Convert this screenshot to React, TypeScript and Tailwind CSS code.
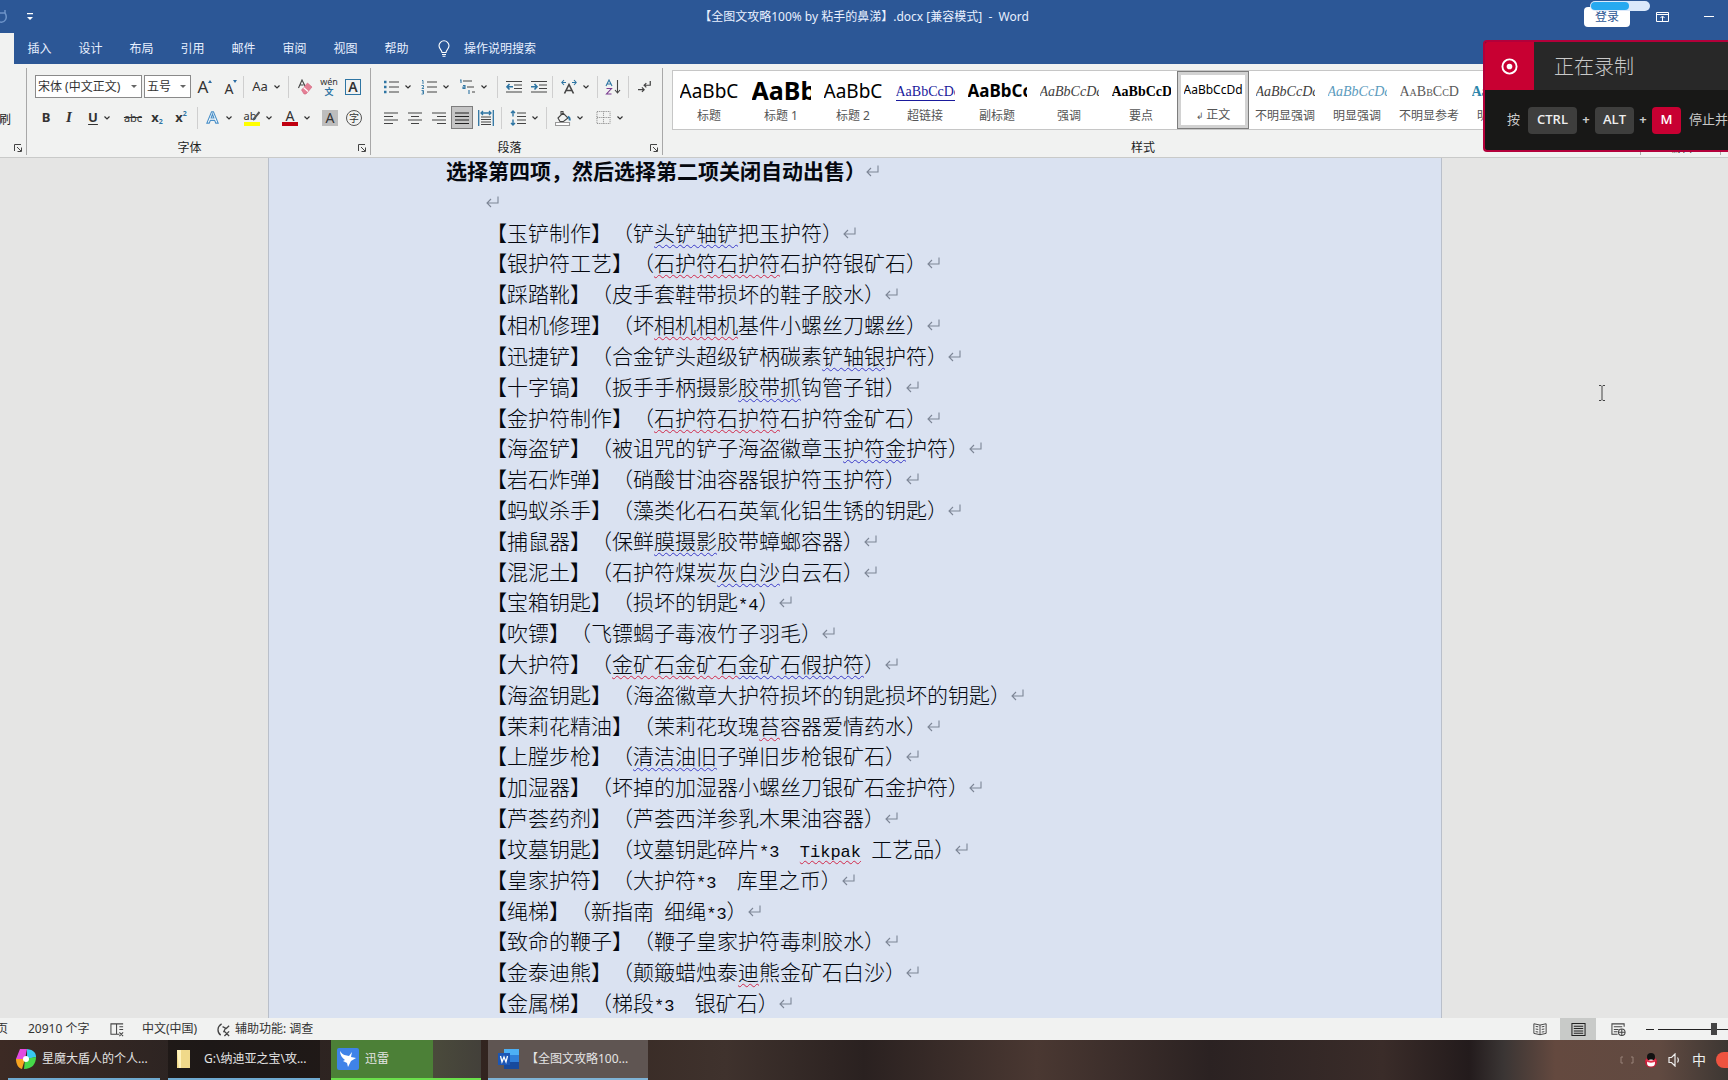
import type { ReactNode } from 'react';
import clsx from 'clsx';

const tabs = ['插入', '设计', '布局', '引用', '邮件', '审阅', '视图', '帮助'];

// ~text~ is a grammar hint (blue), ^text^ is a spelling hint (red)
const paragraphs = [
  '【玉铲制作】（铲~头铲轴铲~把玉护符）',
  '【银护符工艺】（^石护符石护符^石护符银矿石）',
  '【踩踏靴】（皮手套鞋带损坏的鞋子胶水）',
  '【相机修理】（坏^相机相机^基件小螺丝刀螺丝）',
  '【迅捷铲】（合金铲头超级铲柄碳素~铲轴银~护符）',
  '【十字镐】（扳手手柄摄影~胶带抓~钩管子钳）',
  '【金护符制作】（^石护符石护符^石护符金矿石）',
  '【海盗铲】（被诅咒的铲子海盗徽章玉~护符金~护符）',
  '【岩石炸弹】（硝酸甘油容器银护符玉护符）',
  '【蚂蚁杀手】（藻类化石石英氧化铝生锈的钥匙）',
  '【捕鼠器】（保鲜~膜摄影~胶带蟑螂容器）',
  '【混泥土】（石护符煤炭~灰白沙~白云石）',
  '【宝箱钥匙】（损坏的钥匙*4）',
  '【吹镖】（飞镖蝎子毒液竹子羽毛）',
  '【大护符】（^金矿石金矿石^~金矿石假护符~）',
  '【海盗钥匙】（海盗徽章大护符损坏的钥匙损坏的钥匙）',
  '【茉莉花精油】（茉莉花玫瑰^苔^容器爱情药水）',
  '【上膛步枪】（~清洁油旧~子弹旧步枪银矿石）',
  '【加湿器】（坏掉的加湿器小螺丝刀银矿石金护符）',
  '【芦荟药剂】（芦荟西洋参乳木果油容器）',
  '【坟墓钥匙】（坟墓钥匙碎片*3  ^Tikpak^ 工艺品）',
  '【皇家护符】（大护符*3  库里之币）',
  '【绳梯】（新指南 细绳*3）',
  '【致命的鞭子】（鞭子皇家护符毒刺胶水）',
  '【金泰迪熊】（颠簸蜡烛泰^迪^熊金矿石白沙）',
  '【金属梯】（梯段*3  银矿石）',
];

const styles = [
  { name: '标题', sample: 'AaBbC', look: 'text-[19px] text-black' },
  { name: '标题 1', sample: 'AaBb', look: 'text-[25px] font-bold text-black' },
  { name: '标题 2', sample: 'AaBbC', look: 'text-[19px] text-black' },
  { name: '超链接', sample: 'AaBbCcDd', look: 'font-[Liberation_Serif] text-[14px] text-[#1a1a9c] underline underline-offset-4' },
  { name: '副标题', sample: 'AaBbCc', look: 'text-[17px] font-bold text-black' },
  { name: '强调', sample: 'AaBbCcDd', look: 'font-[Liberation_Serif] text-[14px] italic text-[#404040]' },
  { name: '要点', sample: 'AaBbCcD', look: 'font-[Liberation_Serif] text-[14px] font-bold text-black' },
  { name: '正文', sample: 'AaBbCcDd', look: 'text-[12px] text-black', active: true },
  { name: '不明显强调', sample: 'AaBbCcDd', look: 'font-[Liberation_Serif] text-[14px] italic text-[#404040]' },
  { name: '明显强调', sample: 'AaBbCcDd', look: 'font-[Liberation_Serif] text-[14px] italic text-[#5b9bbd]' },
  { name: '不明显参考', sample: 'AaBbCcDd', look: 'font-[Liberation_Serif] text-[14px] text-[#5a5a5a] [font-variant-caps:small-caps]' },
  { name: '明显参考', sample: 'AaBbCcDd', look: 'font-[Liberation_Serif] text-[14px] font-bold text-[#2e86ab]' },
];

function Chevron() {
  return (
    <svg viewBox="0 0 6 4" className="h-1 w-1.5 shrink-0" fill="none" stroke="#333" strokeWidth="1.2">
      <path d="M.5.5 3 3 5.500.5" />
    </svg>
  );
}

function Sep() {
  return <div className="h-[22px] w-px shrink-0 bg-[#cfcfcf]" />;
}

function Glyph({ children, size = 16 }: { children: ReactNode; size?: number }) {
  return (
    <svg viewBox="0 0 16 16" width={size} height={size} className="shrink-0" fill="none" stroke="#444" strokeWidth="1.1">
      {children}
    </svg>
  );
}

function Tool({ label, className, drop, children }: { label: string; className?: string; drop?: boolean; children: ReactNode }) {
  return (
    <button aria-label={label} className={clsx('flex h-[23px] shrink-0 items-center justify-center leading-none text-[#333]', className)}>
      {children}
      {drop && <span className="ml-1.5"><Chevron /></span>}
    </button>
  );
}

function Launcher({ label }: { label: string }) {
  return (
    <button aria-label={label} className="mr-1 flex shrink-0">
      <svg viewBox="0 0 8 8" className="h-2 w-2" fill="none" stroke="#444">
        <path d="M.5 7V.5H7M3 3l4 4M7.500 3.500v4h-4" />
      </svg>
    </button>
  );
}

function Group({ label, className, launcher = true, children }: { label: string; className?: string; launcher?: boolean; children: ReactNode }) {
  return (
    <section className={clsx('mb-0.5 mt-1 flex shrink-0 flex-col border-r border-[#a8a8a8] pt-[7px]', className)}>
      {children}
      <div className="mt-3 flex h-3.5 items-center">
        <span className={clsx('flex-1 text-center text-xs leading-[14px] text-[#222]', launcher && 'pr-3.5')}>{label}</span>
        {launcher && <Launcher label={`${label}设置`} />}
      </div>
    </section>
  );
}

function Combo({ label, value, className }: { label: string; value: string; className: string }) {
  return (
    <label className={clsx('relative flex h-[23px] shrink-0 items-center border border-[#8a8a8a] bg-white', className)}>
      <span className="sr-only">{label}</span>
      <select className="w-full appearance-none bg-transparent pl-0.5 text-xs text-[#333] outline-none" defaultValue={value}>
        <option>{value}</option>
      </select>
      <span className="pointer-events-none absolute right-1 border-x-[3px] border-t-[3px] border-x-transparent border-t-[#666]" />
    </label>
  );
}

function FontGroup() {
  return (
    <Group label="字体" className="w-[344px] pl-2">
      <div className="flex items-center">
        <Combo label="字体" value="宋体 (中文正文)" className="w-[107px]" />
        <Combo label="字号" value="五号" className="ml-0.5 w-[47px]" />
        <Tool label="增大字号" className="w-7">
          <span className="text-[17px]">A</span>
          <span className="mb-2.5 border-x-2 border-b-[3px] border-x-transparent border-b-[#2b6ca3]" />
        </Tool>
        <Tool label="减小字号" className="w-6">
          <span className="pt-1 text-[14px]">A</span>
          <span className="mb-2.5 border-x-2 border-t-[3px] border-x-transparent border-t-[#2b6ca3]" />
        </Tool>
        <Sep />
        <Tool label="更改大小写" className="w-11" drop><span className="text-[13px]">Aa</span></Tool>
        <Sep />
        <div className="flex gap-2 pl-2">
          <Tool label="清除格式">
            <Glyph>
              <path d="M1.500 9 5 1l3 6M2.500 6h4" />
              <path d="m4.500 11 6-7 4.500 4-6 7h-2z" fill="#e57f95" stroke="#d0647d" strokeWidth=".6" />
              <path d="m6.500 8.500 4.500 4" stroke="#fff" />
            </Glyph>
          </Tool>
          <Tool label="拼音指南" className="w-4 flex-col">
            <span className="text-[9px] leading-[10px]">wén</span>
            <span className="text-[9px] font-bold leading-[10px] text-[#2e75a3]">文</span>
          </Tool>
          <Tool label="字符边框"><span className="flex h-4 w-4 items-center justify-center border border-[#2e75a3] text-[14px] font-semibold">A</span></Tool>
        </div>
      </div>
      <div className="mt-2 flex items-center">
        <Tool label="加粗" className="w-[22px] text-[13px] font-bold">B</Tool>
        <Tool label="倾斜" className="w-6 font-[Liberation_Serif] text-[15px] font-bold italic">I</Tool>
        <Tool label="下划线" className="mr-1 w-9 text-[13px] font-bold" drop><span className="underline underline-offset-2">U</span></Tool>
        <Tool label="删除线" className="w-6 text-[11px]"><span className="line-through">abc</span></Tool>
        <Tool label="下标" className="w-6 text-[13px] font-bold">x<span className="pt-2 text-[7px] text-[#2e75a3]">2</span></Tool>
        <Tool label="上标" className="mr-1 w-6 text-[13px] font-bold">x<span className="pb-2 text-[7px] text-[#2e75a3]">2</span></Tool>
        <Sep />
        <Tool label="文本效果" className="w-10" drop>
          <Glyph size={15}>
            <path d="M2 14 7 2h2l5 12h-2.500l-1.200-3H5.700l-1.200 3zM6.500 8.500h3L8 4.500z" stroke="#4a90c8" strokeWidth="1.2" fill="#fff" />
          </Glyph>
        </Tool>
        <Tool label="突出显示" className="w-10" drop>
          <span className="flex flex-col items-center">
            <span className="flex text-[11px] leading-3">ab
              <svg viewBox="0 0 8 12" className="-ml-1 h-3 w-2" stroke="#555" strokeWidth="2"><path d="M7.500 2 1 10" /></svg>
            </span>
            <span className="h-1 w-4 bg-[#ffff00]" />
          </span>
        </Tool>
        <Tool label="字体颜色" className="w-9" drop>
          <span className="flex flex-col items-center">
            <span className="text-[14px] leading-3">A</span>
            <span className="h-1 w-4 bg-[#c00010]" />
          </span>
        </Tool>
        <div className="flex gap-2 pl-2">
          <Tool label="字符底纹"><span className="flex h-4 w-4 items-center justify-center bg-[#bdbdbd] text-[14px]">A</span></Tool>
          <Tool label="带圈字符"><span className="flex h-4 w-4 items-center justify-center rounded-full border border-[#555] text-[10px]">字</span></Tool>
        </div>
      </div>
    </Group>
  );
}

function ParagraphGroup() {
  return (
    <Group label="段落" className="w-[292px] pl-3">
      <div className="flex items-center">
        <Tool label="项目符号" className="w-7" drop>
          <Glyph>
            <path d="M6 3h10M6 8h10M6 13h10" />
            <path d="M1 3h2.500M1 8h2.500M1 13h2.500" stroke="#2e75a3" strokeWidth="2.4" />
          </Glyph>
        </Tool>
        <Tool label="编号" className="ml-2.5 w-7" drop>
          <Glyph>
            <path d="M6 3h10M6 8h10M6 13h10" />
            <path d="M1 1.500h1V5M.5 6.500h2V8L1 9.500h2M.5 11.500h2v3.500H.5M1 13h1.500" stroke="#2e75a3" strokeWidth=".9" />
          </Glyph>
        </Tool>
        <Tool label="多级列表" className="ml-2.5 mr-2.5 w-7" drop>
          <Glyph>
            <path d="M4 2h9M8 8h7M13 13h3" />
            <path d="M1 1h1v3M4 6.500h2v3H4V8h2M10 11v4" stroke="#2e75a3" />
          </Glyph>
        </Tool>
        <Sep />
        <Tool label="减少缩进" className="w-7 pl-1">
          <Glyph>
            <path d="M0 2.500h16M8 6h8M8 9.500h8M0 13h16" />
            <path d="M7 7.800H1M3.500 5 1 7.800l2.500 2.700" stroke="#2e75a3" strokeWidth="1.6" />
          </Glyph>
        </Tool>
        <Tool label="增加缩进" className="w-[26px]">
          <Glyph>
            <path d="M0 2.500h16M8 6h8M8 9.500h8M0 13h16" />
            <path d="M0 7.800h6M3.500 5 6 7.800l-2.500 2.700" stroke="#2e75a3" strokeWidth="1.6" />
          </Glyph>
        </Tool>
        <Sep />
        <Tool label="中文版式" className="w-11" drop>
          <Glyph>
            <path d="m3.500 14.500 4.500-9 4.500 9M5 11.500h6" strokeWidth="1.6" />
            <path d="M5 3.500H1M3 1 .8 3.500 3 6M11 3.500h4M13 1l2.200 2.500L13 6" stroke="#2e75a3" />
          </Glyph>
        </Tool>
        <Sep />
        <Tool label="排序" className="w-[30px]">
          <Glyph>
            <path d="m1 7 3-6 3 6M2 5h4" stroke="#2e75a3" />
            <path d="M1.500 9.500h5l-5 5.500h5" stroke="#7a3b8f" />
            <path d="M12.500 1v13M10 11l2.500 3 2.500-3" />
          </Glyph>
        </Tool>
        <Sep />
        <Tool label="显示编辑标记" className="w-8">
          <Glyph size={14}>
            <path d="M14 1v5H7M9.500 3.500 7 6l2.500 2.500M0 11h7M4.500 8.500 7 11l-2.500 2.500" strokeWidth="1.4" />
          </Glyph>
        </Tool>
      </div>
      <div className="mt-2 flex items-center">
        <Tool label="左对齐" className="w-4"><Glyph><path d="M1 3h14M1 6.500h9M1 10h14M1 13.500h9" /></Glyph></Tool>
        <Tool label="居中" className="ml-2 w-4"><Glyph><path d="M1 3h14M4 6.500h8M1 10h14M4 13.500h8" /></Glyph></Tool>
        <Tool label="右对齐" className="ml-2 w-4"><Glyph><path d="M1 3h14M6 6.500h9M1 10h14M6 13.500h9" /></Glyph></Tool>
        <Tool label="两端对齐" className="ml-1 w-[22px] border border-[#7d7d7d] bg-[#c5c5c5]"><Glyph><path d="M1 3h14M1 6.500h14M1 10h14M1 13.500h14" stroke="#222" /></Glyph></Tool>
        <Tool label="分散对齐" className="ml-1 mr-1.5 w-[18px]">
          <Glyph>
            <path d="M3 7h10M3 9.500h10M3 12h10M3 14.500h10" />
            <path d="M.7 0v16M15.300 0v16M3 3h10M5 1 3 3l2 2M11 1l2 2-2 2" stroke="#2e75a3" strokeWidth="1.3" />
          </Glyph>
        </Tool>
        <Sep />
        <Tool label="行距" className="w-11" drop>
          <Glyph>
            <path d="M7 3h9M7 6.500h9M7 10h9M7 13.500h9" />
            <path d="M3 1v5.500M1 3l2-2 2 2M3 9.500V15M1 13l2 2 2-2" stroke="#2e75a3" strokeWidth="1.4" />
          </Glyph>
        </Tool>
        <Sep />
        <Tool label="底纹" className="w-11" drop>
          <Glyph>
            <path d="m3 8 5-5 5 5-4.500 3.500H5zM6 5V1.500h2V5" />
            <path d="M13 6.500c1.500 1 2 2.500 1.500 4" stroke="#2e75a3" strokeWidth="2" />
            <path d="M.5 12.500h14v3H.5z" fill="#fff" stroke="#999" />
          </Glyph>
        </Tool>
        <Tool label="边框" className="w-9" drop>
          <Glyph size={15}><path d="M1 1.500h14v13H1zM8 1.500v13M1 8h14" strokeDasharray="1 1" stroke="#888" /></Glyph>
        </Tool>
      </div>
    </Group>
  );
}

function StylesGroup() {
  return (
    <Group label="样式" className="w-[978px] pl-[9px]">
      <div className="-mb-px -mt-[5px] flex h-[60px] overflow-hidden border border-[#c6c6c6] bg-white">
        {styles.map((s) => (
          <button
            key={s.name}
            className={clsx(
              'flex w-[72px] shrink-0 flex-col items-center justify-end',
              s.active ? 'border border-[#7d7d7d] bg-white pb-1 outline-[3px] -outline-offset-4 outline-[#d2d2d2]' : 'pb-[5px]'
            )}
          >
            <span className={clsx('mb-px flex h-8 w-[59px] items-center overflow-hidden whitespace-nowrap', s.look)}>{s.sample}</span>
            <span className="whitespace-nowrap text-xs leading-4 text-[#555]">
              {s.active && <span className="text-[9px]">↲ </span>}
              {s.name}
            </span>
          </button>
        ))}
      </div>
    </Group>
  );
}

function ReturnMark() {
  return (
    <svg viewBox="0 0 13 12" className="h-3 w-[13px] shrink-0" fill="none" stroke="#7d8696" strokeWidth="1.1">
      <path d="M12 .5V7H1M5 3 1 7l4 4" />
    </svg>
  );
}

function Line({ text }: { text: string }) {
  const runs = text.split(/(~[^~]+~|\^[^^]+\^)/).filter(Boolean);
  return (
    <p className="flex h-[30px] items-center whitespace-pre pl-10">
      <span>
        {runs.map((run, i) => {
          const hint = run[0] === '~' ? 'blue' : run[0] === '^' ? 'red' : '';
          const body = hint ? run.slice(1, -1) : run;
          return (
            <span
              key={i}
              className={clsx(
                hint && 'underline decoration-wavy decoration-1 underline-offset-[3px] [text-decoration-skip-ink:none]',
                hint === 'blue' && 'decoration-[#3a3ac8]',
                hint === 'red' && 'decoration-[#d0284a]'
              )}
            >
              {body.split(/([ -~]+)/).map((part, j) =>
                /^[ -~]+$/.test(part) ? <span key={j} className="font-[Liberation_Mono] text-[17px] leading-none">{part}</span> : part
              )}
            </span>
          );
        })}
      </span>
      <ReturnMark />
    </p>
  );
}

function Recorder() {
  return (
    <aside className="absolute right-0 top-10 w-[245px] overflow-hidden rounded-l border-2 border-r-0 border-[#b3003a] bg-[#181817] text-[#c9c9c9]">
      <div className="flex h-12 items-center bg-[#282828]">
        <div className="flex h-12 w-[49px] items-center justify-center bg-[#c80032]">
          <svg viewBox="0 0 18 18" className="h-[17px] w-[17px]" fill="none">
            <circle cx="9" cy="9" r="7.500" stroke="#fff" strokeWidth="2" />
            <circle cx="9" cy="9" r="3" fill="#fff" />
          </svg>
        </div>
        <span className="ml-5 pt-0.5 text-[20px] font-light">正在录制</span>
      </div>
      <div className="flex h-[60px] items-center whitespace-nowrap pl-[22px] text-[13px]">
        按
        <kbd className="ml-2 flex h-[27px] w-[49px] items-center justify-center rounded-sm bg-[#3e3e3d] font-[Open_Sans] text-[13px] font-semibold text-[#eee]">CTRL</kbd>
        <span className="w-[18px] text-center font-bold">+</span>
        <kbd className="flex h-[27px] w-[39px] items-center justify-center rounded-sm bg-[#3e3e3d] font-[Open_Sans] text-[13px] font-semibold text-[#eee]">ALT</kbd>
        <span className="w-[18px] text-center font-bold">+</span>
        <kbd className="mr-2 flex h-[27px] w-[29px] items-center justify-center rounded-sm bg-[#c80032] font-[Open_Sans] text-[13px] font-semibold text-white">M</kbd>
        停止并
      </div>
    </aside>
  );
}

function StatusBar() {
  return (
    <footer className="flex h-[22px] shrink-0 items-center overflow-hidden bg-[#f1f2f1] text-xs text-[#333]">
      <span className="w-7 shrink-0"><span className="-ml-1">页</span></span>
      <span className="w-[82px]">20910 个字</span>
      <Glyph size={15}>
        <path d="M1 2h6v11H1zM7 2h7M7 13h3M10 5h4M10 8h4M10 11l4 4M14 11l-4 4" />
      </Glyph>
      <span className="ml-[17px] w-[74px]">中文(中国)</span>
      <Glyph size={15}>
        <path d="M6 2C1 5 1 11 5 14M7 5l4 2 3-3M10 7l-2 4M9 10l5 5M14 10l-5 5" strokeWidth="1.4" />
      </Glyph>
      <span className="ml-1">辅助功能: 调查</span>
      <div className="ml-auto flex h-full shrink-0 items-center">
        <button aria-label="阅读视图" className="flex w-9 justify-center pr-1"><Glyph size={14}><path d="M8 3.500 1 2v11l7 1.500L15 13V2zM8 3.500v11M3 5l3 .5M3 8l3 .5M3 11l3 .5M10 5.500l3-.5M10 8.500l3-.5M10 11.500l3-.5" /></Glyph></button>
        <button aria-label="页面视图" className="flex h-full w-9 items-center justify-center bg-[#c8cac8]"><Glyph size={15}><path d="M1 1.500h14v13H1zM3 4.500h10M3 7h10M3 9.500h10M3 12h10" stroke="#222" /></Glyph></button>
        <button aria-label="Web 视图" className="ml-3 flex w-5 justify-center"><Glyph size={15}><path d="M14 5V2H1v11h6M3 5h9M3 8h5M3 10.500h4" /><circle cx="11.500" cy="11" r="3.500" /><path d="M8 11h7M11.500 7.500v7" /></Glyph></button>
        <button aria-label="缩小" className="ml-[18px] h-px w-2 bg-[#222]" />
        <div className="flex w-[74px] items-center overflow-hidden pl-1">
          <input
            type="range"
            aria-label="缩放"
            defaultValue={50}
            className="h-3 w-[112px] shrink-0 appearance-none bg-[linear-gradient(#222,#222)] bg-size-[100%_1px] bg-center bg-no-repeat [&::-webkit-slider-thumb]:h-3 [&::-webkit-slider-thumb]:w-1.5 [&::-webkit-slider-thumb]:appearance-none [&::-webkit-slider-thumb]:bg-[#444]"
          />
        </div>
      </div>
    </footer>
  );
}

function TaskItem({ label, className, children }: { label: string; className: string; children: ReactNode }) {
  return (
    <button className={clsx('flex h-full shrink-0 items-center border-b-2 text-left text-xs text-[#e4e4e4]', className)}>
      {children}
      <span className="truncate">{label}</span>
    </button>
  );
}

function Taskbar() {
  return (
    <nav className="flex h-10 shrink-0 items-center overflow-hidden bg-[linear-gradient(90deg,#3c2a24_0%,#2a2322_12%,#33251f_30%,#3f322d_42%,#2a2120_50%,#4a3832_60%,#2b2222_70%,#3a2c29_80%,#231b1c_85%,#3a3534_87%,#64493f_90%,#614a41_96%,#3d3733_100%)] pl-2">
      <TaskItem label="星魔大盾人的个人..." className="w-[152px] border-[#6fa9cf] pl-2">
        <svg viewBox="0 0 20 22" className="mr-1.5 h-[22px] w-5 shrink-0">
          <path d="M4 1h7L9 11H0z" fill="#e14be0" />
          <path d="M11 1c7 1 9 4 9 8l-9 2z" fill="#38c8f0" />
          <path d="M0 11h9l-3 10C2 20 0 16 0 11z" fill="#f7a421" />
          <path d="m9 11 11-2c0 7-4 12-12 12z" fill="#46d84a" />
          <circle cx="10" cy="11" r="3" fill="#fff" />
        </svg>
      </TaskItem>
      <TaskItem label="G:\纳迪亚之宝\攻..." className="ml-2 w-[152px] border-[#6fa9cf] bg-black/30 pl-2">
        <svg viewBox="0 0 16 20" className="mr-3 h-5 w-4 shrink-0"><path d="M1 1h13v18H1z" fill="#f0d98a" /><path d="M1 1h4v18H3z" fill="#fff3bd" /></svg>
      </TaskItem>
      <TaskItem label="迅雷" className="ml-[11px] w-[150px] border-[#6be04b] bg-[linear-gradient(90deg,#4c8037_68%,#4a4a3b_68%,#43403a)] pl-1.5">
        <svg viewBox="0 0 22 22" className="mr-1.5 h-[22px] w-[22px] shrink-0">
          <rect width="22" height="22" rx="2" fill="#3f83e8" />
          <path d="M3 3c3 5 6 4 9 5l3-4-1 5 5 1-5 3-3 6-1-4-4-2 2-1C5 10 3 7 3 3z" fill="#fff" />
        </svg>
      </TaskItem>
      <TaskItem label="【全图文攻略100..." className="ml-[7px] w-[160px] border-[#7fb3d6] bg-[#5f5552] pl-2.5 pr-2">
        <svg viewBox="0 0 22 22" className="mr-1.5 h-[22px] w-[22px] shrink-0">
          <path d="M6 1h15v20H6z" fill="#2f7fd8" />
          <path d="M6 1h15v6H6z" fill="#4db0f5" />
          <path d="M6 14h15v7H6z" fill="#174a9c" />
          <path d="M0 5h12v12H0z" fill="#1c56b5" />
          <path d="m2.500 8 1.500 6 2-5 2 5 1.500-6" fill="none" stroke="#fff" strokeWidth="1.300" />
        </svg>
      </TaskItem>
      <div className="ml-auto flex shrink-0 items-center gap-2.5 text-[#eee]">
        <svg viewBox="0 0 14 14" className="h-3.5 w-3.5" fill="none" stroke="#988279"><path d="M3 4H1v6h2M11 4h2v6h-2" /></svg>
        <svg viewBox="0 0 14 16" className="h-4 w-3.5">
          <ellipse cx="7" cy="10" rx="6" ry="5.500" fill="#c51f3a" />
          <circle cx="7" cy="5" r="4" fill="#111" />
          <ellipse cx="7" cy="11" rx="4" ry="3.500" fill="#fff" />
          <path d="M2 8c3 2 7 2 10 0" stroke="#e0304a" strokeWidth="2" fill="none" />
        </svg>
        <svg viewBox="0 0 14 14" className="h-3.5 w-3.5" fill="none" stroke="#eee" strokeWidth="1.200"><path d="M7 1 3.500 4.500H1v5h2.500L7 13zM9.500 4.500c1 1.500 1 3.500 0 5" /></svg>
        <span className="w-3.5 text-[14px] leading-none">中</span>
        <span className="h-4 w-3 rounded-l-full bg-[#ee5340]" />
      </div>
    </nav>
  );
}

export default function App() {
  return (
    <div className="relative flex h-screen flex-col overflow-hidden bg-[#e5e5e4] font-['Noto_Sans','Noto_Sans_CJK_SC',sans-serif]">
      {/* TITLE BAR */}
      <header className="shrink-0 bg-[#2c5796] text-xs text-[#e8f0ff]">
        <div className="flex h-[33px] items-center">
          <div className="flex flex-1 items-center">
            <svg viewBox="0 0 8 14" className="h-3.5 w-2" fill="none" stroke="#6d93c8" strokeWidth="1.500"><path d="M0 3h5V0M0 12c5 1 8-4 5-9" /></svg>
            <svg viewBox="0 0 6 8" className="ml-[19px] h-2 w-1.5" fill="#fff"><path d="M0 0h6v1.200H0zM0 4h6L3 7z" /></svg>
          </div>
          <h1 className="whitespace-pre [text-spacing-trim:space-all]">【全图文攻略100% by 粘手的鼻涕】.docx [兼容模式]  -  Word</h1>
          <div className="flex flex-1 items-center justify-end">
            <div className="relative mr-[26px]">
              <button className="flex h-5 w-[46px] items-center justify-center rounded-sm bg-white text-[#2c5796]">登录</button>
              <div className="absolute -top-1.5 left-1.5 h-2.5 w-[60px] rounded-full bg-[#dbe9fb] p-px">
                <div className="h-2 w-[38px] rounded-full bg-[#27a9f0]" />
              </div>
            </div>
            <button aria-label="功能区显示选项">
              <svg viewBox="0 0 13 10" className="h-2.5 w-[13px]" fill="none" stroke="#fff"><path d="M.5.5h12v9H.5zM.5 2.500h12M6.500 9V4.500M4.500 6l2-2 2 2" /></svg>
            </button>
            <button aria-label="最小化" className="ml-[35px] mr-3.5 h-px w-2.5 bg-white" />
          </div>
        </div>
        <nav className="flex h-[31px]">
          <div className="w-3.5 bg-[#f1f2f1]" />
          {tabs.map((tab) => (
            <a key={tab} href="#" className="flex w-[51px] items-center justify-center">{tab}</a>
          ))}
          <button className="ml-4 flex items-center">
            <svg viewBox="0 0 12 17" className="mr-3.5 h-[17px] w-3" fill="none" stroke="#fff" strokeWidth="1.100">
              <path d="M4 12.500C4 10 1 9 1 5.800a5 5 0 0 1 10 0C11 9 8 10 8 12.500zM4 14.500h4M4.500 16.300h3" />
            </svg>
            操作说明搜索
          </button>
        </nav>
      </header>

      {/* RIBBON */}
      <div className="flex shrink-0 overflow-hidden border-b border-[#c9cac9] bg-[#f1f2f1]">
        <section className="mb-0.5 mt-1 flex w-[27px] shrink-0 flex-col items-end justify-end border-r border-[#a8a8a8] pb-[3px]">
          <span className="mr-[15px] text-xs leading-4 text-[#222]">刷</span>
          <span className="mt-4 flex"><Launcher label="剪贴板设置" /></span>
        </section>
        <FontGroup />
        <ParagraphGroup />
        <StylesGroup />
        <Group label="编辑" launcher={false} className="w-20">
          <div className="h-[54px]" />
        </Group>
      </div>

      {/* DOCUMENT */}
      <main className="flex min-h-0 flex-1 overflow-hidden pl-[268px]">
        <article className="-mt-0.5 flex w-[1174px] shrink-0 flex-col justify-between border-x border-[#b9bfca] bg-[#dae2f1] pl-[177px] text-[21px] font-light leading-[30px] text-[#05080f] [text-spacing-trim:space-all]">
          <p className="flex h-[30px] items-center font-bold">选择第四项，然后选择第二项关闭自动出售）<ReturnMark /></p>
          <p className="flex h-[30px] items-center pl-10"><ReturnMark /></p>
          {paragraphs.map((text) => (
            <Line key={text} text={text} />
          ))}
        </article>
      </main>

      <StatusBar />
      <Taskbar />
      <Recorder />

      {/* text cursor */}
      <svg viewBox="0 0 8 16" className="absolute left-[1598px] top-[385px] h-4 w-2" fill="none" stroke="#444">
        <path d="M1 .5h2l1 1 1-1h2M4 1.500v13M1 15.500h2l1-1 1 1h2" />
      </svg>
    </div>
  );
}
